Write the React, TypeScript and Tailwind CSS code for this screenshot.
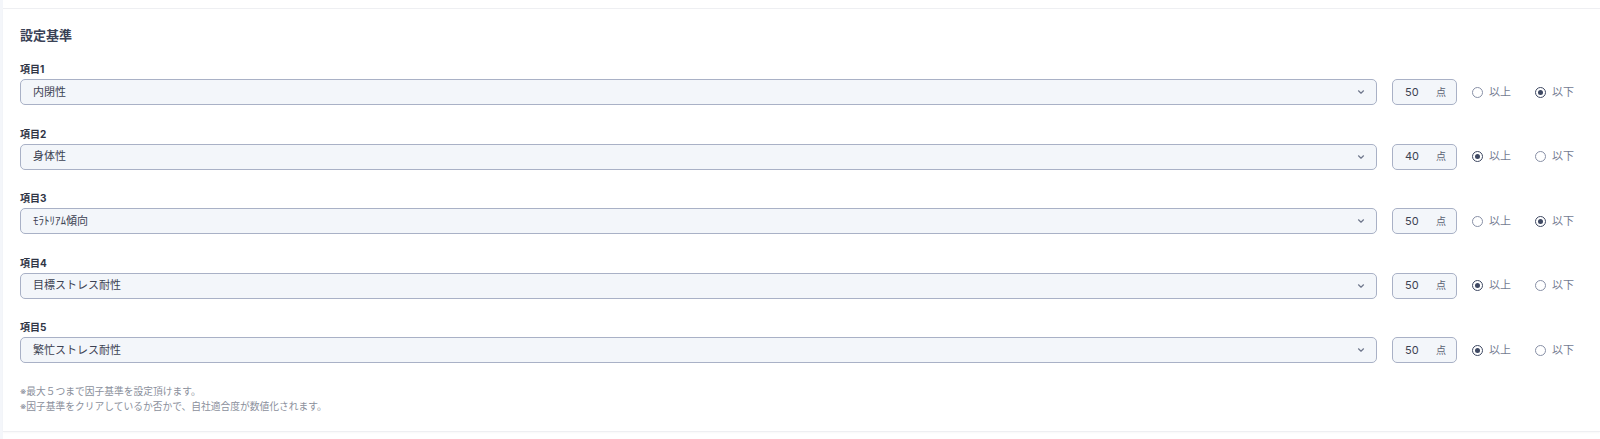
import React from "react";

const rows = [
  { label: "項目1", value: "内閉性", score: "50", dir: "below" },
  { label: "項目2", value: "身体性", score: "40", dir: "above" },
  { label: "項目3", value: "ﾓﾗﾄﾘｱﾑ傾向", score: "50", dir: "below" },
  { label: "項目4", value: "目標ストレス耐性", score: "50", dir: "above" },
  { label: "項目5", value: "繁忙ストレス耐性", score: "50", dir: "above" },
];

function Radio({ checked, label }: { checked: boolean; label: string }) {
  return (
    <div className="flex items-center gap-[6px] w-[39px]">
      <span
        className={
          checked
            ? "w-[11px] h-[11px] rounded-full border-[1.5px] border-[#3e4862] flex items-center justify-center shrink-0"
            : "w-[11px] h-[11px] rounded-full border-[1.5px] border-[#8890a6] shrink-0"
        }
      >
        {checked && <span className="w-[5px] h-[5px] rounded-full bg-[#3e4862]" />}
      </span>
      <span className="text-[11px] leading-none text-[#737b91] whitespace-nowrap">{label}</span>
    </div>
  );
}

export default function App() {
  return (
    <div
      className="w-[1600px] h-[439px] bg-white flex"
      style={{ fontFamily: '"Inter", "Noto Sans CJK JP", sans-serif' }}
    >
      <div className="w-[3px] bg-[#f4f6fa] shrink-0" />
      <div className="flex-1 pt-[8px]">
        <div className="border-t border-b border-[#eeeff2] shadow-[0_1px_2px_rgba(0,0,0,0.03)] h-[424px] pl-[17px] pr-[26px] pt-[16px]">
          <h2 className="text-[13px] leading-[20px] font-bold text-[#3a4256]">設定基準</h2>
          <div className="mt-[16px] flex flex-col gap-[20.5px]">
            {rows.map((r) => (
              <div key={r.label} className="flex flex-col">
                <div className="text-[10px] leading-[16px] font-bold text-[#2f3545] mb-[2px]">{r.label}</div>
                <div className="flex items-center h-[26px]">
                  <div className="flex-1 h-[26px] rounded-[5px] border border-[#a9b1c6] bg-[#f3f6fa] flex items-center pl-[12px] pr-[11px]">
                    <span className="flex-1 text-[11px] text-[#3c4252]">{r.value}</span>
                    <svg width="8" height="6" viewBox="0 0 8 6" className="text-[#6f778c]">
                      <path d="M1.5 1.8 L4 4.2 L6.5 1.8" fill="none" stroke="currentColor" strokeWidth="1.2" strokeLinecap="round" strokeLinejoin="round" />
                    </svg>
                  </div>
                  <div className="ml-[15px] w-[65px] h-[26px] rounded-[5px] border border-[#a9b1c6] bg-[#f3f6fa] flex items-center pl-[12px] pr-[10px]">
                    <span className="flex-1 text-[11px] text-[#3c4252]">{r.score}</span>
                    <span className="text-[10px] text-[#5b6275]">点</span>
                  </div>
                  <div className="ml-[15px] flex items-center gap-[24px]">
                    <Radio checked={r.dir === "above"} label="以上" />
                    <Radio checked={r.dir === "below"} label="以下" />
                  </div>
                </div>
              </div>
            ))}
          </div>
          <div className="mt-[22px] text-[9.75px] leading-[14.5px] text-[#8b909c]">
            <p>※最大５つまで因子基準を設定頂けます。</p>
            <p>※因子基準をクリアしているか否かで、自社適合度が数値化されます。</p>
          </div>
        </div>
      </div>
    </div>
  );
}
